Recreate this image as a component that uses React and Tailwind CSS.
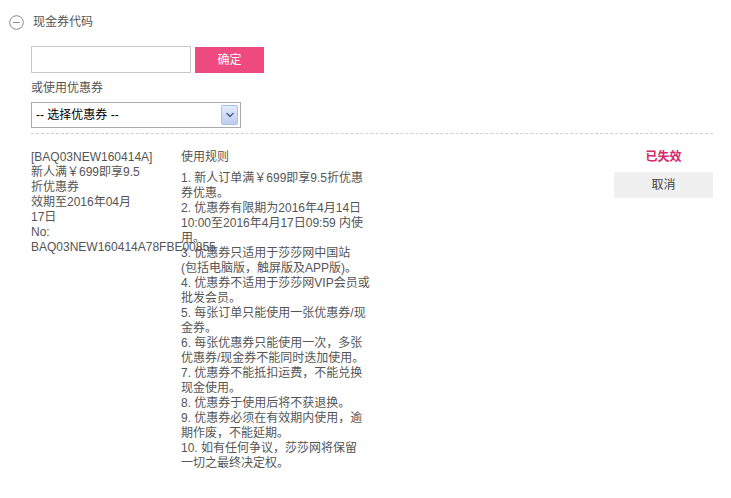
import { ChevronDown } from 'lucide-react';

// 按参考图的换行排好
const rules = [
  ['1. 新人订单满￥699即享9.5折优惠', '券优惠。'],
  ['2. 优惠券有限期为2016年4月14日', '10:00至2016年4月17日09:59 内使', '用。'],
  ['3. 优惠券只适用于莎莎网中国站', '(包括电脑版，触屏版及APP版)。'],
  ['4. 优惠券不适用于莎莎网VIP会员或', '批发会员。'],
  ['5. 每张订单只能使用一张优惠券/现', '金券。'],
  ['6. 每张优惠券只能使用一次，多张', '优惠券/现金券不能同时迭加使用。'],
  ['7. 优惠券不能抵扣运费，不能兑换', '现金使用。'],
  ['8. 优惠券于使用后将不获退换。'],
  ['9. 优惠券必须在有效期内使用，逾', '期作废，不能延期。'],
  ['10. 如有任何争议，莎莎网将保留', '一切之最终决定权。']
];

export default function App() {
  return (
    <div
      className="w-[731px] h-[498px] bg-white text-[12px] text-[#555] overflow-hidden"
      style={{ fontFamily: '"Liberation Sans", "Noto Sans CJK SC", sans-serif' }}
    >
      {/* 标题 */}
      <div className="flex items-center h-4 mt-[14px] pl-[9px] gap-[9px]">
        <svg width="15" height="15" viewBox="0 0 15 15" className="shrink-0">
          <circle cx="7.5" cy="7.5" r="6.8" fill="none" stroke="#8a8a8a" strokeWidth="1" />
          <line x1="4" y1="7.5" x2="11" y2="7.5" stroke="#8a8a8a" strokeWidth="1" />
        </svg>
        <span>现金券代码</span>
      </div>

      <div className="pl-[31px] pr-[18px]">
        {/* 输入代码 */}
        <div className="flex items-center gap-1 mt-4">
          <input className="w-[160px] h-[27px] border border-[#c8c8c8] bg-white outline-none px-1" />
          <button className="w-[69px] h-[26px] bg-[#ee4a80] text-white">确定</button>
        </div>

        <div className="mt-[8px] leading-[15px]">或使用优惠券</div>

        {/* 选择优惠券 */}
        <div className="mt-[6px] w-[210px] h-[26px] border border-[#aaa] flex items-center justify-between pl-1 pr-[2px] text-black">
          <span>-- 选择优惠券 --</span>
          <span className="w-[17px] h-[20px] rounded-[2px] border border-[#a9c0e8] bg-gradient-to-b from-[#e2ebfb] to-[#bccdf2] flex items-center justify-center">
            <ChevronDown className="w-3 h-3 text-[#4d6185]" strokeWidth={3} />
          </span>
        </div>

        <div className="mt-[5px] border-t border-dashed border-[#d0d0d0]" />

        {/* 优惠券明细 */}
        <div className="flex pt-[16px] leading-[15px]">
          <div className="w-[150px] shrink-0">
            <div className="w-[112px]">
              <div>[BAQ03NEW160414A]</div>
              <div>新人满￥699即享9.5折优惠券</div>
              <div>效期至2016年04月17日</div>
              <div>No:</div>
              <div className="whitespace-nowrap">BAQ03NEW160414A78FBE00855</div>
            </div>
          </div>

          <div className="w-[190px] shrink-0">
            <div>使用规则</div>
            <div className="mt-[6px]">
              {rules.map((lines) =>
                lines.map((l) => (
                  <div key={l} className="whitespace-nowrap">
                    {l}
                  </div>
                ))
              )}
            </div>
          </div>

          <div className="flex-1 flex justify-end">
            <div className="w-[99px] flex flex-col items-center">
              <div className="font-bold text-[#d42a6f]">已失效</div>
              <button className="mt-[7px] w-[99px] h-[26px] bg-[#f0f0f0] text-[#444]">取消</button>
            </div>
          </div>
        </div>
      </div>
    </div>
  );
}
